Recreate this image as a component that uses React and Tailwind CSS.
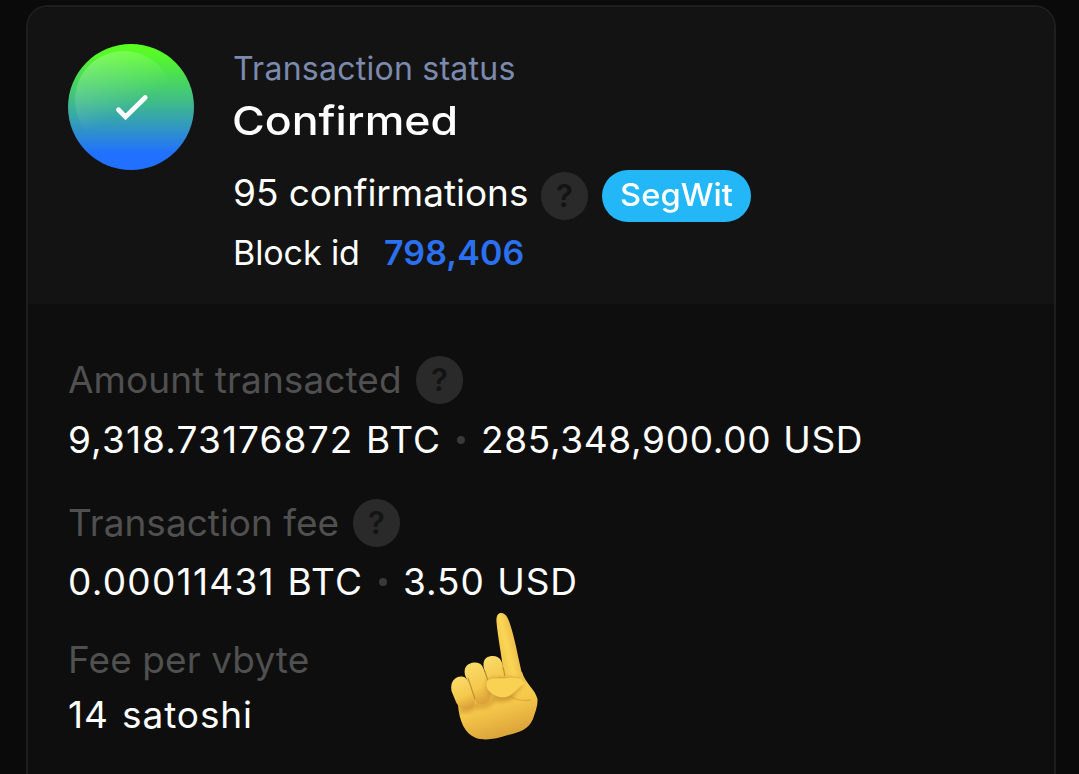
function Help() {
  return (
    <span className="flex h-12 w-[47px] shrink-0 items-center justify-center rounded-full bg-[#2a2a2a] pb-0.5 text-[31px] leading-none font-semibold text-[#141414]">
      ?
    </span>
  );
}

function Dot() {
  return <span className="h-2 w-2 shrink-0 rounded-full bg-[#393939]" />;
}

function StatusBadge() {
  return (
    <svg className="h-[126px] w-[126px] shrink-0" viewBox="0 0 126 126">
      <defs>
        <linearGradient id="base" x1="0" y1="0" x2="0" y2="1">
          <stop offset="0" stopColor="#5bff1f" />
          <stop offset="0.1" stopColor="#54f72c" />
          <stop offset="0.5" stopColor="#3cb594" />
          <stop offset="0.87" stopColor="#2270ff" />
          <stop offset="1" stopColor="#2270ff" />
        </linearGradient>
        <linearGradient id="gloss" x1="0.2" y1="0.1" x2="0.5" y2="0.62">
          <stop offset="0" stopColor="#fff" stopOpacity="0.22" />
          <stop offset="1" stopColor="#fff" stopOpacity="0" />
        </linearGradient>
      </defs>
      <circle cx="63" cy="63" r="63" fill="url(#base)" />
      <circle cx="56" cy="56" r="49" fill="url(#gloss)" />
      <path d="M50.500 65.800 57.500 72.900 77.200 53.500" fill="none" stroke="#fff" strokeWidth="4.800" strokeLinecap="round" />
    </svg>
  );
}

function PointingHand() {
  return (
    <svg className="absolute top-[600px] left-[430px] h-[150px] w-[130px]" viewBox="0 0 130 150">
      <defs>
        <linearGradient id="skin" x1="0" y1="0" x2="0.35" y2="1">
          <stop offset="0" stopColor="#fbd957" />
          <stop offset="0.6" stopColor="#f5c84b" />
          <stop offset="1" stopColor="#dda63a" />
        </linearGradient>
        <linearGradient id="index" gradientUnits="userSpaceOnUse" x1="69" y1="50" x2="90" y2="45">
          <stop offset="0" stopColor="#f3c64c" />
          <stop offset="0.4" stopColor="#fbd655" />
          <stop offset="1" stopColor="#e6b545" />
        </linearGradient>
        <linearGradient id="finger" x1="0.2" y1="0" x2="0.5" y2="1">
          <stop offset="0" stopColor="#fbdc6a" />
          <stop offset="0.65" stopColor="#f4c84c" />
          <stop offset="1" stopColor="#dba238" />
        </linearGradient>
        <filter id="soft" x="-30%" y="-30%" width="160%" height="160%">
          <feGaussianBlur stdDeviation="2.200" />
        </filter>
        <clipPath id="palm">
          <path d="M28 104C28 82 52 72 73 75L92 72C95 83 105 89 107.500 99C108 106 105 113 103 119C98 130 90 132 78 135C66 139 55 141 46 138C35 134 29 121 28 104Z" />
        </clipPath>
      </defs>
      <path d="M28 104C28 82 52 72 73 75L92 72C95 83 105 89 107.500 99C108 106 105 113 103 119C98 130 90 132 78 135C66 139 55 141 46 138C35 134 29 121 28 104Z" fill="url(#skin)" />
      <g clipPath="url(#palm)">
        <path d="M28 109Q39 113 45 105Q56 109 63 99Q75 101 83 95" fill="none" stroke="#bd7f25" strokeWidth="5" opacity="0.5" filter="url(#soft)" />
        <path d="M80 96Q88 102 101 100" fill="none" stroke="#d1922c" strokeWidth="1.500" opacity="0.45" />
      </g>
      <path d="M66.500 22C66 16 68 13 71 13C76 13 78 18 80 24C85 39 87 52 90 65C91 71 93 77 96 83Q90 84 83 88L74 78C72 56 68 39 66.500 22Z" fill="url(#index)" />
      <path d="M53.500 66C53 58 58 56 63 56C70 56 72 61 73 67L76 80L65 95L57 82Z" fill="url(#finger)" />
      <path d="M35 75C33 66 39 63 44 62.500C51 62 53 66 55 73L61 93C61 101 57 104 53 104.500C47 105 44 101 43 95Z" fill="url(#finger)" />
      <path d="M21.500 91C20 81 25 77 31 76.500C36 76 38 81 40 86L44.500 99C46 106 42 109 37 109.500C31 110 28 106 26 102Z" fill="url(#finger)" />
      <path d="M38 78L45 99M55 71L60 88M73 67L75 76" fill="none" stroke="#b07a26" strokeWidth="1.200" opacity="0.7" />
      <path d="M56 84C56 79 61 77 67 78C75 79 82 75 90 79L93 85C89 90 85 95 80 98C74 101 65 99 59 94C56 91 55.500 88 56 84Z" fill="#bd8429" opacity="0.55" filter="url(#soft)" />
      <path d="M56.500 83C57 78 61 77 67 78C75 79 82 75 90 78L95 83C89 87 85 92 80 95.500C74 99 65 97 60 92C57 89 56 87 56.500 83Z" fill="#f9d253" />
      <path d="M57 80Q62 77 73 78Q82 76 90 78" fill="none" stroke="#c48a2c" strokeWidth="1" opacity="0.4" />
    </svg>
  );
}

export default function App() {
  return (
    <main className="relative h-[774px] w-[1079px] overflow-hidden bg-[#0a0a0a] pt-[5px] pl-[26px] font-['Inter',sans-serif] text-white">
      <section className="h-[800px] w-[1030px] overflow-hidden rounded-[22px] border-2 border-[#1e1e1e] bg-[#0e0e0e]">
        <header className="flex h-[297px] gap-10 bg-[#131313] pt-[37px] pl-10">
          <StatusBadge />
          <div className="-ml-px pt-[5px]">
            <p className="h-[47px] text-[32px] leading-10 tracking-[0.26px] text-[#7c8aae]">Transaction status</p>
            <h1 className="-ml-px h-[74px] origin-left scale-x-[1.116] text-[40px] leading-[50px] font-medium">Confirmed</h1>
            <div className="flex h-[52px] items-center">
              <span className="w-[308px] pb-[7px] text-[37px] leading-none tracking-[-0.04px] whitespace-nowrap">95 confirmations</span>
              <Help />
              <span className="ml-3.5 flex h-[52px] w-[149px] justify-center rounded-full bg-[#23b7f7] text-[31px] leading-[49px] font-medium">
                <span className="scale-x-[1.055]">SegWit</span>
              </span>
            </div>
            <p className="mt-[9px] flex text-[34px] leading-[44px]">
              <span className="w-[151px] tracking-[-0.1px]">Block id</span>
              <span className="font-semibold tracking-[0.1px] text-[#2b70ee]">798,406</span>
            </p>
          </div>
        </header>
        <dl className="pt-[52px] pl-10 text-[37px] whitespace-nowrap">
          <dt className="flex h-12 items-center gap-[14px] text-[#505050]">
            <span className="w-[334px] pb-0.5 leading-none tracking-[0.07px]">Amount transacted</span>
            <Help />
          </dt>
          <dd className="mt-[14px] flex h-[44px] items-center leading-[44px]">
            <span className="w-[389px] tracking-[1.12px] [word-spacing:1px]">9,318.73176872 BTC</span>
            <Dot />
            <span className="ml-4 tracking-[0.66px] [word-spacing:1px]">285,348,900.00 USD</span>
          </dd>
          <dt className="mt-[37px] flex h-12 items-center gap-[14px] text-[#505050]">
            <span className="w-[271px] pb-0.5 leading-none">Transaction fee</span>
            <Help />
          </dt>
          <dd className="mt-[13px] flex h-[44px] items-center leading-[44px]">
            <span className="w-[311px] tracking-[1.28px] [word-spacing:1px]">0.00011431 BTC</span>
            <Dot />
            <span className="ml-4 tracking-[0.95px] [word-spacing:1px]">3.50 USD</span>
          </dd>
          <dt className="mt-[34px] h-[44px] leading-[44px] tracking-[0.1px] text-[#505050]">Fee per vbyte</dt>
          <dd className="mt-[11px] leading-[44px] tracking-[0.9px] [word-spacing:2px]">14 satoshi</dd>
        </dl>
      </section>
      <PointingHand />
    </main>
  );
}
